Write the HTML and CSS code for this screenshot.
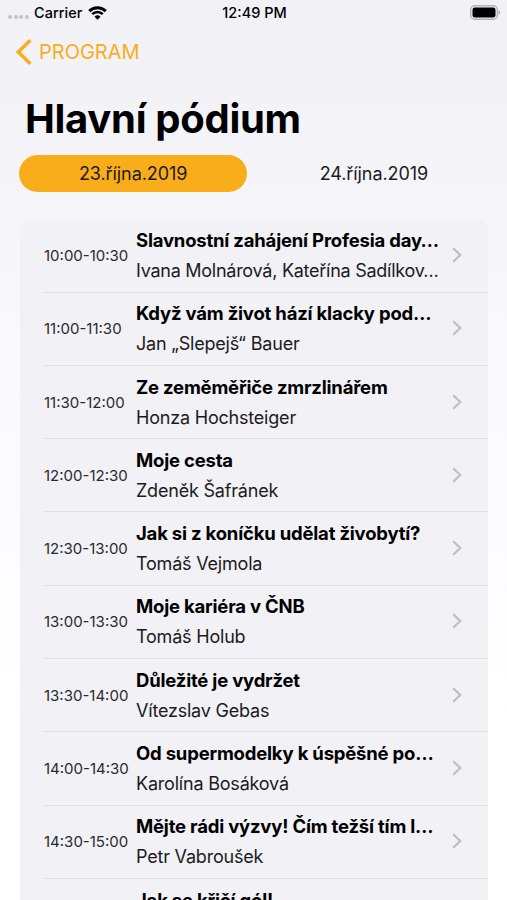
FILE: index.html
```html
<!DOCTYPE html>
<html lang="cs">

<head>
    <meta charset="UTF-8">
    <meta name="viewport" content="width=device-width, initial-scale=1.0">
    <title>Hlavní pódium</title>
    <link rel="stylesheet" href="styles.css">
</head>

<body>
    <!-- Status bar -->
    <div class="status">
        <div class="status-left">
            <span class="signal"><i></i><i></i><i></i><i></i></span>
            <span class="carrier">Carrier</span>
            <svg class="wifi" width="19" height="14" viewBox="0 0 19 14">
                <path d="M1.2 5.1 A11.8 11.8 0 0 1 17.8 5.1" fill="none" stroke="#000" stroke-width="2.9" />
                <path d="M4.2 8.2 A7.5 7.5 0 0 1 14.8 8.2" fill="none" stroke="#000" stroke-width="2.5" />
                <path d="M6.5 10.7 A4.3 4.3 0 0 1 12.5 10.7 L9.5 13.7 Z" />
            </svg>
        </div>
        <div class="clock">12:49 PM</div>
        <div class="status-right">
            <svg width="31" height="15" viewBox="0 0 31 15">
                <rect x="0.7" y="0.7" width="26.6" height="13.6" rx="4" fill="none" stroke="#b3b3b6" stroke-width="1.4" />
                <rect x="2.5" y="2.5" width="23" height="10" rx="2.2" />
                <path d="M28.7 5.2 Q30.2 5.9 30.2 7.5 T28.7 9.8 Z" fill="#a5a5a8" />
            </svg>
        </div>
    </div>

    <!-- Navbar -->
    <div class="navbar">
        <svg width="16" height="26" viewBox="0 0 16 26">
            <path d="M14.4 1.2 L2.3 13 L14.4 24.8" fill="none" stroke="#faad1b" stroke-width="3.4" />
        </svg>
        <span>PROGRAM</span>
    </div>

    <h1>Hlavní pódium</h1>

    <div class="days">
        <div class="day active">23.října.2019</div>
        <div class="day">24.října.2019</div>
    </div>

    <!-- Program list -->
    <div class="list">
        <div class="row">
            <div class="time">10:00-10:30</div>
            <div class="info">
                <div class="name">Slavnostní zahájení Profesia day…</div>
                <div class="speaker long">Ivana Molnárová, Kateřína Sadílkov…</div>
            </div>
            <svg class="arrow" viewBox="0 0 10 16"><path d="M1.2 1.2 L8.2 8 L1.2 14.8" /></svg>
        </div>
        <div class="row">
            <div class="time">11:00-11:30</div>
            <div class="info">
                <div class="name">Když vám život hází klacky pod…</div>
                <div class="speaker">Jan „Slepejš“ Bauer</div>
            </div>
            <svg class="arrow" viewBox="0 0 10 16"><path d="M1.2 1.2 L8.2 8 L1.2 14.8" /></svg>
        </div>
        <div class="row">
            <div class="time">11:30-12:00</div>
            <div class="info">
                <div class="name">Ze zeměměřiče zmrzlinářem</div>
                <div class="speaker">Honza Hochsteiger</div>
            </div>
            <svg class="arrow" viewBox="0 0 10 16"><path d="M1.2 1.2 L8.2 8 L1.2 14.8" /></svg>
        </div>
        <div class="row">
            <div class="time">12:00-12:30</div>
            <div class="info">
                <div class="name">Moje cesta</div>
                <div class="speaker">Zdeněk Šafránek</div>
            </div>
            <svg class="arrow" viewBox="0 0 10 16"><path d="M1.2 1.2 L8.2 8 L1.2 14.8" /></svg>
        </div>
        <div class="row">
            <div class="time">12:30-13:00</div>
            <div class="info">
                <div class="name">Jak si z koníčku udělat živobytí?</div>
                <div class="speaker">Tomáš Vejmola</div>
            </div>
            <svg class="arrow" viewBox="0 0 10 16"><path d="M1.2 1.2 L8.2 8 L1.2 14.8" /></svg>
        </div>
        <div class="row">
            <div class="time">13:00-13:30</div>
            <div class="info">
                <div class="name">Moje kariéra v ČNB</div>
                <div class="speaker">Tomáš Holub</div>
            </div>
            <svg class="arrow" viewBox="0 0 10 16"><path d="M1.2 1.2 L8.2 8 L1.2 14.8" /></svg>
        </div>
        <div class="row">
            <div class="time">13:30-14:00</div>
            <div class="info">
                <div class="name">Důležité je vydržet</div>
                <div class="speaker">Vítezslav Gebas</div>
            </div>
            <svg class="arrow" viewBox="0 0 10 16"><path d="M1.2 1.2 L8.2 8 L1.2 14.8" /></svg>
        </div>
        <div class="row">
            <div class="time">14:00-14:30</div>
            <div class="info">
                <div class="name">Od supermodelky k úspěšné po…</div>
                <div class="speaker">Karolína Bosáková</div>
            </div>
            <svg class="arrow" viewBox="0 0 10 16"><path d="M1.2 1.2 L8.2 8 L1.2 14.8" /></svg>
        </div>
        <div class="row">
            <div class="time">14:30-15:00</div>
            <div class="info">
                <div class="name">Mějte rádi výzvy! Čím težší tím l…</div>
                <div class="speaker">Petr Vabroušek</div>
            </div>
            <svg class="arrow" viewBox="0 0 10 16"><path d="M1.2 1.2 L8.2 8 L1.2 14.8" /></svg>
        </div>
        <div class="row">
            <div class="time"></div>
            <div class="info">
                <div class="name">Jak se křičí gól!</div>
            </div>
        </div>
    </div>
</body>

</html>
```

FILE: styles.css
```css
* {
    margin: 0;
    padding: 0;
    box-sizing: border-box;
}

body {
    height: 900px;
    overflow: hidden;
    display: flex;
    flex-direction: column;
    font-family: Inter, "Liberation Sans", sans-serif;
    color: #000;
    background: linear-gradient(#f1f1f6 0px, #f2f2f7 90px, #f8f8fc 300px, #fff 720px);
}

/* Status bar */
.status {
    height: 25px;
    flex: none;
    display: flex;
    align-items: center;
    padding: 0 6px 0 8px;
    font-size: 14.5px;
    font-weight: 500;
}

.status-left,
.status-right {
    flex: 1;
    display: flex;
    align-items: center;
}

.status-right {
    justify-content: flex-end;
}

.signal {
    display: flex;
    gap: 1.7px;
    margin: 9px 5px 0 0;
}

.signal i {
    width: 4px;
    height: 4px;
    border-radius: 50%;
    background: #c3c3c8;
}

.wifi {
    margin-left: 6px;
}

/* Navbar with the back link */
.navbar {
    height: 54px;
    flex: none;
    display: flex;
    align-items: center;
    gap: 7px;
    padding-left: 16px;
    font-size: 20px;
    color: #faad1b;
}

h1 {
    height: 76px;
    flex: none;
    padding: 15px 0 0 25px;
    font-size: 40px;
    line-height: 50px;
    font-weight: 700;
    letter-spacing: -0.3px;
    white-space: nowrap;
}

/* Day switcher */
.days {
    display: flex;
    flex: none;
    padding: 0 19px;
}

.day {
    width: 229px;
    height: 37px;
    line-height: 37px;
    border-radius: 19px;
    text-align: center;
    font-size: 18px;
    letter-spacing: -0.08px;
    color: #1b1b1d;
}

.day + .day {
    margin-left: 12.5px;
}

.active {
    background: #faad1b;
}

/* Program list */
.list {
    width: 468px;
    flex: none;
    margin: 27.3px 0 0 20px;
    padding-left: 24px;
    border-radius: 12px;
    background: #f1f1f6;
}

.row {
    height: 73.3px;
    display: flex;
    align-items: center;
    border-bottom: 1px solid #dfdfe4;
}

.time {
    width: 92px;
    flex: none;
    font-size: 15px;
    color: #2a2a2c;
}

.info {
    width: 321px;
    height: 61px;
    flex: none;
    white-space: nowrap;
}

.name {
    font-size: 18.5px;
    line-height: 30px;
    font-weight: 700;
    letter-spacing: -0.2px;
}

.speaker {
    font-size: 18px;
    line-height: 31px;
    letter-spacing: -0.2px;
    color: #1b1b1d;
}

.long {
    letter-spacing: -0.26px;
}

.arrow {
    width: 10px;
    height: 16px;
    margin: -1px 0 0 -5px;
}

.arrow path {
    fill: none;
    stroke: #bfbfc4;
    stroke-width: 2.3;
}
```
